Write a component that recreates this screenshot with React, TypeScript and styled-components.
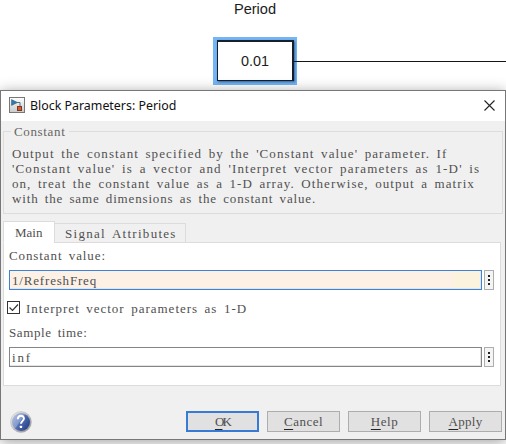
import React from "react";
import styled, { createGlobalStyle } from "styled-components";

const GlobalStyle = createGlobalStyle`
  * { box-sizing: border-box; }
  html, body { margin: 0; padding: 0; overflow: hidden; background: #fff; }
`;

const Screen = styled.main`
  width: 506px;
  height: 444px;
  overflow: hidden;
  background: #fff;
  display: flex;
  flex-direction: column;
`;

const Canvas = styled.section`
  height: 90px;
  flex: none;
  display: grid;
  grid-template-columns: 213px 84px 1fr;
  grid-template-rows: 37px 48px;
  font-family: "Liberation Sans", Arial, sans-serif;
  color: #1c1c1c;
`;

const BlockLabel = styled.div`
  grid-column: 2;
  font-size: 14.6px;
  line-height: 19px;
  text-align: center;
`;

const ConstantBlock = styled.div`
  grid-column: 2;
  grid-row: 2;
  border: 3px solid #74b5f6;
  border-width: 3px 3px 4px 4px;
  display: flex;
`;

const BlockBody = styled.div`
  flex: 1;
  border: 2px solid #16202c;
  border-bottom-width: 1px;
  border-left-width: 1px;
  box-shadow: 1px 1px 2px #36649a;
  background: #fff;
  font-size: 14.4px;
  line-height: 38px;
  text-align: center;
`;

const Wire = styled.div`
  grid-column: 3;
  grid-row: 2;
  height: 1px;
  margin-top: 24px;
  margin-left: -3px;
  background: #151515;
`;

const Dialog = styled.section`
  position: relative;
  height: 350px;
  flex: none;
  border: 1px solid #777;
  background: #f0f0f0;
  box-shadow: 0 2px 13px rgba(0, 0, 0, 0.38);
  font-family: "Liberation Serif", "Times New Roman", serif;
  font-size: 13px;
  color: #505050;
`;

const TitleBar = styled.header`
  height: 30px;
  padding: 0 10px 2px 8px;
  background: #fff;
  display: flex;
  align-items: center;
`;

const Title = styled.h1`
  flex: 1;
  margin: 1px 0 0 5px;
  font: 400 12.4px/28px "Noto Sans", "Open Sans", sans-serif;
  color: #111;
  white-space: nowrap;
`;

const Text = styled.span<{ $track?: number }>`
  display: block;
  line-height: 15px;
  white-space: pre;
  letter-spacing: ${(p) => p.$track ?? 0.9}px;
  word-spacing: 2.2px;
`;

const Group = styled.fieldset`
  height: 90px;
  margin: 3px 2px 0;
  padding: 7px 0 0 8px;
  border: 1px solid #dcdcdc;
  min-width: 0;

  legend {
    height: 15px;
    margin-left: -1px;
    padding: 0 4px 0 3px;
    color: #666;
  }
`;

const Tabs = styled.nav`
  height: 22px;
  margin: 7px 0 -1px 2px;
  display: flex;
  align-items: flex-end;
  position: relative;
`;

const Tab = styled.div<{ $active?: boolean }>`
  width: ${(p) => (p.$active ? 52 : 132)}px;
  height: ${(p) => (p.$active ? 22 : 20)}px;
  margin-right: -1px;
  padding: ${(p) => (p.$active ? 3 : 2)}px 0 0 ${(p) => (p.$active ? 11 : 10)}px;
  border: 1px solid #dcdcdc;
  border-bottom-color: ${(p) => (p.$active ? "#fff" : "#dcdcdc")};
  background: ${(p) => (p.$active ? "#fff" : "#f0f0f0")};
`;

const Panel = styled.div`
  width: 498px;
  height: 144px;
  margin-left: 2px;
  padding: 5px 6px 0 5px;
  border: 1px solid #dcdcdc;
  background: #fff;
`;

const FieldRow = styled.div`
  height: 20px;
  margin-top: 7px;
  display: flex;
  gap: 2px;
`;

const Field = styled.div<{ $focused?: boolean }>`
  width: 473px;
  padding: 2px 0 0 2px;
  border: 1px solid ${(p) => (p.$focused ? "#3c82dc" : "#858585")};
  background: ${(p) => (p.$focused ? "linear-gradient(90deg, #fdf1e6 94%, #fcf3df 94%)" : "#fff")};
  box-shadow: inset -1px -1px #e4e4e4;
`;

const MoreButton = styled.div`
  width: 10px;
  border: 1px solid #adadad;
  background: #f4f4f4;
  display: flex;
  flex-direction: column;
  align-items: center;
  justify-content: center;
  gap: 2px;
`;

const Dot = styled.i`
  width: 2px;
  height: 2px;
  background: #222;
`;

const CheckRow = styled.div`
  height: 15px;
  margin: 11px 0 9px -2px;
  display: flex;
  gap: 6px;
`;

const Footer = styled.footer`
  height: 23px;
  margin-top: 25px;
  padding: 0 3px 0 9px;
  display: flex;
  gap: 8px;

  > svg { margin: 0 auto 0 0; }
`;

const Button = styled.div<{ $primary?: boolean }>`
  width: 73px;
  height: 21px;
  padding-top: ${(p) => (p.$primary ? 1 : 2)}px;
  border: ${(p) => (p.$primary ? "2px solid #377bd5" : "1px solid #adadad")};
  background: #e1e1e1;
  display: flex;
  justify-content: center;

  u { text-decoration-thickness: 1px; text-underline-offset: 3px; text-decoration-color: #222; }
`;

function BlockIcon() {
  return (
    <svg width="16" height="17" viewBox="0 0 16 17">
      <defs>
        <linearGradient id="tile" x2="0" y2="1"><stop stopColor="#fff" /><stop offset="1" stopColor="#c9c9c9" /></linearGradient>
      </defs>
      <rect x=".5" y=".5" width="15" height="15" fill="url(#tile)" stroke="#777" />
      <path d="M2.5 2.5v6l6-3z" fill="#3578a8" stroke="#275b80" strokeWidth=".5" />
      <path d="M8 5.5h3v4" fill="none" stroke="#567184" />
      <rect x="8.5" y="9.5" width="4" height="4" fill="#d85c2c" stroke="#7c3823" />
    </svg>
  );
}

function HelpIcon() {
  return (
    <svg width="22" height="22" viewBox="0 0 22 22">
      <defs>
        <linearGradient id="rim" x2="1" y2="1"><stop stopColor="#f4f4f4" /><stop offset="1" stopColor="#85858a" /></linearGradient>
        <linearGradient id="ball" x2="1" y2=".7"><stop stopColor="#b8c6e4" /><stop offset=".5" stopColor="#8399cc" /><stop offset=".55" stopColor="#5270b2" /><stop offset="1" stopColor="#263f8b" /></linearGradient>
      </defs>
      <circle cx="11" cy="11" r="10.5" fill="url(#rim)" stroke="#bbb" strokeWidth=".5" />
      <circle cx="11" cy="11" r="9" fill="url(#ball)" />
      <path d="M7.8 8.2c.2-4.6 6.2-4.4 6.1-.6 0 2.2-2.8 2.4-2.9 5.2" fill="none" stroke="#fff" strokeWidth="2" />
      <rect x="9.8" y="14.7" width="2.3" height="2.3" rx=".6" fill="#fff" />
    </svg>
  );
}

const More = () => <MoreButton><Dot /><Dot /><Dot /></MoreButton>;

export default function App() {
  return (
    <Screen>
      <GlobalStyle />
      <Canvas>
        <BlockLabel>Period</BlockLabel>
        <ConstantBlock><BlockBody>0.01</BlockBody></ConstantBlock>
        <Wire />
      </Canvas>
      <Dialog>
        <TitleBar>
          <BlockIcon />
          <Title>Block Parameters: Period</Title>
          <svg width="11" height="11" viewBox="0 0 11 11"><path d="M.5.5l10 10M10.5.5l-10 10" stroke="#222" strokeWidth="1.1" /></svg>
        </TitleBar>
        <Group>
          <legend><Text $track={0.65}>Constant</Text></legend>
          <Text $track={1.09}>Output the constant specified by the 'Constant value' parameter. If</Text>
          <Text $track={1.18}>'Constant value' is a vector and 'Interpret vector parameters as 1-D' is</Text>
          <Text $track={1.06}>on, treat the constant value as a 1-D array. Otherwise, output a matrix</Text>
          <Text $track={0.84}>with the same dimensions as the constant value.</Text>
        </Group>
        <Tabs>
          <Tab $active><Text $track={0}>Main</Text></Tab>
          <Tab><Text $track={1.28}>Signal Attributes</Text></Tab>
        </Tabs>
        <Panel>
          <Text>Constant value:</Text>
          <FieldRow><Field $focused><Text $track={0.82}>1/RefreshFreq</Text></Field><More /></FieldRow>
          <CheckRow>
            <svg width="13" height="13" viewBox="0 0 13 13"><rect x=".5" y=".5" width="12" height="12" fill="#fff" stroke="#333" /><path d="M2.5 6.5l3 3 5.5-6" fill="none" stroke="#333" strokeWidth="1.2" /></svg>
            <Text $track={1}>Interpret vector parameters as 1-D</Text>
          </CheckRow>
          <Text $track={0.6}>Sample time:</Text>
          <FieldRow><Field><Text $track={1.8}>inf</Text></Field><More /></FieldRow>
        </Panel>
        <Footer>
          <HelpIcon />
          <Button $primary><Text $track={-1.8}><u>O</u>K</Text></Button>
          <Button><Text $track={0.5}><u>C</u>ancel</Text></Button>
          <Button><Text $track={0.5}><u>H</u>elp</Text></Button>
          <Button><Text $track={0.3}><u>A</u>pply</Text></Button>
        </Footer>
      </Dialog>
    </Screen>
  );
}
